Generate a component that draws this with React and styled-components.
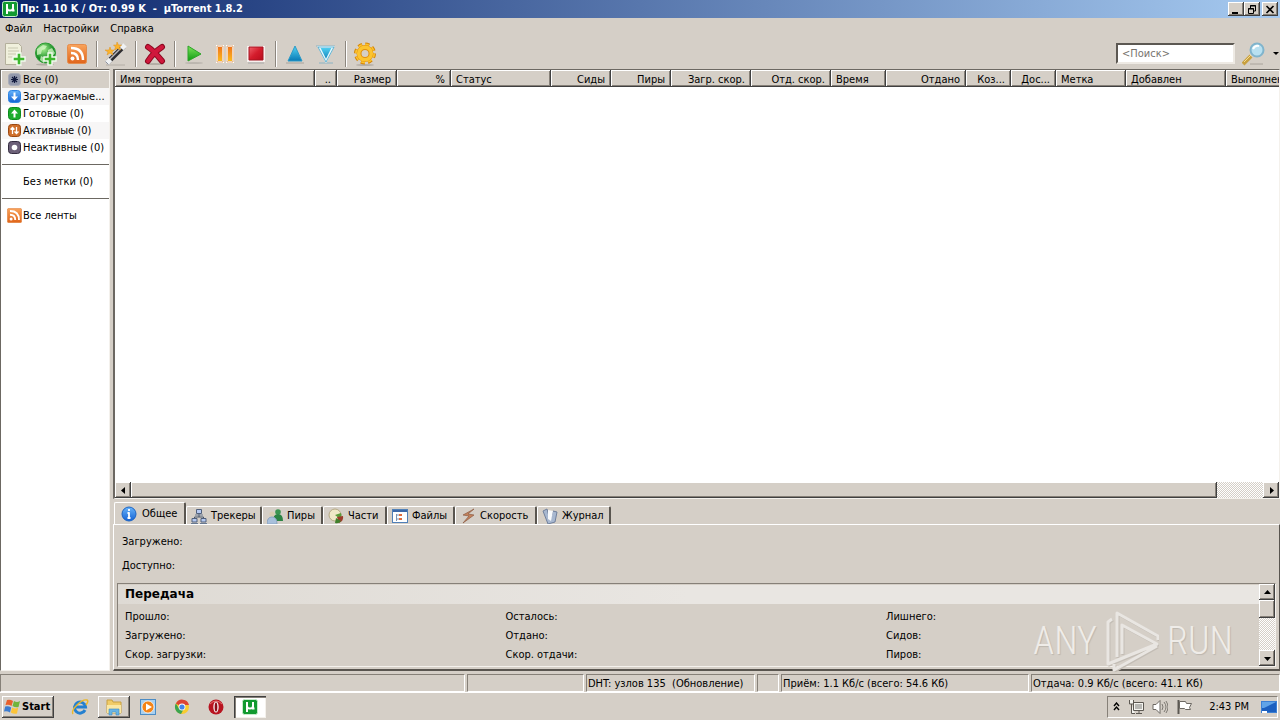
import React from "react";
import styled, { createGlobalStyle, css } from "styled-components";

const Global = createGlobalStyle`
  * { box-sizing: border-box; }
  body { margin: 0; background: #d5cfc7; }
  body, button, input { font-family: Tahoma, "DejaVu Sans Condensed", "DejaVu Sans", sans-serif; font-size: 11px; color: #000; }
  button { padding: 0; border: 0; background: none; }
  svg { display: block; flex: none; }
`;

const face = "#d5cfc7";
const raised = css`
  background: ${face};
  box-shadow: inset -1px -1px #404040, inset 1px 1px #fff, inset -2px -2px #868078;
`;
const checker = css`
  background: repeating-conic-gradient(#fff 0 25%, ${face} 0 50%) 0 0 / 2px 2px;
`;

const Shell = styled.div`
  display: flex;
  flex-direction: column;
  height: 100vh;
  overflow: hidden;
  background: ${face};
`;
const TitleBar = styled.header`
  display: flex;
  align-items: center;
  height: 18px;
  padding: 0 2px;
  gap: 2px;
  background: linear-gradient(90deg, #0a246a, #a6caf0);
`;
const Title = styled.h1`
  flex: 1;
  margin: 0;
  font-size: 11px;
  line-height: 20px;
  font-weight: bold;
  color: #fff;
  white-space: pre;
`;
const WindowButton = styled.button`
  width: 16px;
  height: 14px;
  display: grid;
  place-items: center;
  margin-left: ${(p) => (p.$apart ? 0 : -2)}px;
  ${raised}
`;
const MenuBar = styled.nav`
  display: flex;
  height: 20px;
  padding: 0 5px;
  gap: 11px;
`;
const MenuItem = styled.button`
  line-height: 22px;
`;
const Toolbar = styled.div`
  display: flex;
  align-items: center;
  gap: 7px;
  height: 31px;
  padding: 0 0 0 3px;
`;
const Tool = styled.button`
  width: 24px;
  height: 24px;
`;
const Separator = styled.i`
  width: 1px;
  height: 26px;
  background: #8c867e;
  box-shadow: 1px 0 #fff;
`;
const Search = styled.input`
  width: 119px;
  height: 21px;
  margin-left: auto;
  padding: 0 4px;
  border: 2px solid;
  border-color: #5c5852 #eeeae4 #eeeae4 #5c5852;
  background: #fff;
  outline: 0;
  &::placeholder { color: #77736e; opacity: 1; }
`;
const SearchMenu = styled.button`
  width: 7px;
  height: 20px;
`;
const Main = styled.div`
  flex: 1;
  display: flex;
  gap: 3px;
  min-height: 0;
`;
const Sidebar = styled.aside`
  width: 110px;
  padding: 1px 0 0 1px;
  border: 1px solid;
  border-color: #6c6862 #f4f1ec #f4f1ec #6c6862;
  background: #fff;
`;
const Category = styled.button`
  display: flex;
  align-items: center;
  gap: 1px;
  width: 100%;
  height: 17px;
  padding-left: 5px;
  white-space: nowrap;
  text-align: left;
  background: ${(p) => (p.$selected ? face : p.$tint ? "#f7f6f6" : "transparent")};
`;
const IconSlot = styled.span`
  width: 15px;
  height: 15px;
`;
const Rule = styled.hr`
  height: 1px;
  margin: 8px 0;
  border: 0;
  background: #6c6862;
`;
const Content = styled.main`
  flex: 1;
  display: flex;
  flex-direction: column;
  min-width: 0;
`;
const ListBox = styled.section`
  flex: 1;
  display: flex;
  flex-direction: column;
  overflow: hidden;
  min-height: 0;
  border: 1px solid;
  border-left-width: 2px;
  border-color: #6c6862 #f4f1ec #f4f1ec #6c6862;
  background: #fff;
`;
const ListArea = styled.div`
  flex: 1;
  overflow: hidden;
`;
const Table = styled.table`
  table-layout: fixed;
  width: 1211px;
  border-collapse: collapse;
`;
const Th = styled.th`
  width: ${(p) => p.$w}px;
  height: 17px;
  padding: 1px 6px 0 5px;
  font-weight: normal;
  line-height: 15px;
  white-space: nowrap;
  overflow: hidden;
  text-align: ${(p) => (p.$right ? "right" : "left")};
  ${raised}
`;
const ScrollBar = styled.div`
  display: flex;
  flex-direction: ${(p) => (p.$vertical ? "column" : "row")};
  flex: none;
  ${(p) => (p.$vertical ? "width: 16px;" : "height: 16px;")}
  ${checker}
`;
const ScrollButton = styled.button`
  width: 16px;
  height: 16px;
  display: grid;
  place-items: center;
  flex: none;
  ${raised}
`;
const Thumb = styled.div`
  flex: 0 0 ${(p) => p.$size};
  ${raised}
`;
const Gap = styled.div`
  flex: 1;
`;
const Tabs = styled.div`
  display: flex;
  align-items: flex-end;
  height: 25px;
  padding-left: 1px;
`;
const Tab = styled.button`
  display: flex;
  align-items: center;
  gap: ${(p) => (p.$active ? 5 : 4)}px;
  width: ${(p) => p.$w}px;
  height: ${(p) => (p.$active ? 22 : 18)}px;
  padding: 0 0 0 ${(p) => (p.$active ? 6 : 4)}px;
  white-space: nowrap;
  border-top: 1px solid #fff;
  border-left: 1px solid #fff;
  border-right: 2px solid #59554f;
  border-radius: 2px 2px 0 0;
  background: ${face};
`;
const Panel = styled.section`
  height: 147px;
  display: flex;
  flex-direction: column;
  padding: 5px 3px 2px;
  border-top: 1px solid #fff;
  border-left: 1px solid #fff;
  border-right: 1px solid #59554f;
  border-bottom: 2px solid #59554f;
`;
const Line = styled.div`
  height: 24px;
  padding: 0 5px;
  line-height: 24px;
`;
const Details = styled.div`
  display: flex;
  flex: 1;
  min-height: 0;
  margin-top: 5px;
  border: 1px solid;
  border-color: #868078 #f4f1ec #f4f1ec #868078;
`;
const DetailBody = styled.div`
  flex: 1;
  position: relative;
  padding-top: 1px;
`;
const Heading = styled.h2`
  margin: 0 0 3px;
  padding: 0 7px;
  font-family: Verdana, "DejaVu Sans", sans-serif;
  font-size: 12px;
  line-height: 19px;
  background: linear-gradient(90deg, #dedad4, #e9e6e2 50%, #e9e6e2);
`;
const Facts = styled.div`
  display: grid;
  grid-template-columns: 1fr 1fr 373px;
  padding-left: 7px;
  line-height: 19px;
`;
const Watermark = styled.div`
  position: absolute;
  right: 26px;
  top: 26px;
  display: flex;
  align-items: center;
  gap: 8px;
  font-family: "Roboto Condensed", "Liberation Sans Narrow", sans-serif;
  font-weight: 300;
  font-size: 38px;
  color: #efece8;
  line-height: 62px;
  text-shadow: 1px 1px 1px #bdb7af;
`;
const StatusBar = styled.footer`
  display: flex;
  gap: 2px;
  height: 22px;
  padding-top: 3px;
  border-bottom: 1px solid #fff;
`;
const Status = styled.div`
  flex: ${(p) => (p.$w ? `0 0 ${p.$w}px` : "1")};
  padding-left: 1px;
  line-height: 18px;
  white-space: pre;
  border: 1px solid;
  border-color: #868078 #fff #fff #868078;
`;
const TaskBar = styled.div`
  display: flex;
  align-items: center;
  height: 27px;
  padding: 0 2px;
`;
const Start = styled.button`
  display: flex;
  align-items: center;
  gap: 1px;
  width: 52px;
  height: 22px;
  padding-left: 2px;
  margin-right: 10px;
  font-weight: bold;
  ${raised}
`;
const Task = styled.button`
  width: 32px;
  height: 22px;
  margin-right: 2px;
  display: grid;
  place-items: center;
  ${(p) => p.$open && raised}
  ${(p) =>
    p.$pressed &&
    css`
      background: #fff;
      box-shadow: inset 1px 1px #404040, inset 2px 2px #868078, inset -1px -1px #f4f1ec;
    `}
`;
const Tray = styled.div`
  display: flex;
  align-items: center;
  gap: 8px;
  height: 22px;
  margin-left: auto;
  padding: 0 0 0 5px;
  border: 1px solid;
  border-color: #868078 #fff #fff #868078;
`;
const Clock = styled.time`
  margin: 0 4px 0 9px;
  white-space: nowrap;
`;

const Svg = ({ s = 24, w, h, children, ...rest }) => (
  <svg width={w || s} height={h || s} viewBox={`0 0 ${w || s} ${h || s}`} aria-hidden="true" {...rest}>
    {children}
  </svg>
);

const Defs = () => (
  <svg width="0" height="0" aria-hidden="true">
    <defs>
      <linearGradient id="green" x2="0" y2="1"><stop stopColor="#7ee45a" /><stop offset="1" stopColor="#0c9a12" /></linearGradient>
      <linearGradient id="orange" x2="0" y2="1"><stop stopColor="#f9a45c" /><stop offset="1" stopColor="#e0641a" /></linearGradient>
      <linearGradient id="amber" x2="0" y2="1"><stop stopColor="#f0701c" /><stop offset="1" stopColor="#fcc01c" /></linearGradient>
      <linearGradient id="red" x2="1" y2="1"><stop stopColor="#f0606a" /><stop offset=".5" stopColor="#d41c2c" /><stop offset="1" stopColor="#b80c1c" /></linearGradient>
      <linearGradient id="cyan" x2="0" y2="1"><stop stopColor="#54d4f4" /><stop offset="1" stopColor="#0878b4" /></linearGradient>
      <linearGradient id="blue" x2="0" y2="1"><stop stopColor="#68b4fa" /><stop offset="1" stopColor="#1462d4" /></linearGradient>
      <radialGradient id="globe" cx=".4" cy=".3"><stop stopColor="#a8f090" /><stop offset="1" stopColor="#168c24" /></radialGradient>
    </defs>
  </svg>
);

const Plus = () => (
  <path d="M14 11h4v4h4v4h-4v4h-4v-4h-4v-4h4z" fill="#3cb82c" stroke="#f4fcf0" strokeWidth="1.400" />
);
const MuMark = ({ s = 16 }) => (
  <svg width={s} height={s} viewBox="0 0 16 16" aria-hidden="true">
    <rect x=".5" y=".5" width="15" height="15" rx="2" fill="#129a30" stroke="#c8eccc" />
    <path d="M5 3v10M5 4v3q0 2.500 3 2.500t3-2.500V3v6.500h1.500" fill="none" stroke="#fff" strokeWidth="2" />
  </svg>
);
const Rss = ({ s }) => (
  <svg width={s} height={s} viewBox="0 0 20 20" aria-hidden="true">
    <rect x=".5" y=".5" width="19" height="19" rx="2" fill="url(#orange)" stroke="#e48c4c" />
    <circle cx="5.500" cy="14.500" r="2" fill="#fff" />
    <path d="M4 9q7 0 7 7M4 4q12 0 12 12" fill="none" stroke="#fff" strokeWidth="2.500" />
  </svg>
);

const ToolIcons = {
  add: <Svg><path d="M2.500 1.500h13l3 3v18h-16z" fill="#f0f0dc" stroke="#b4b09c" /><path d="M5 6h10M5 9h11M5 12h8M5 15h5" stroke="#c8c8b0" /><Plus /></Svg>,
  url: <Svg><ellipse cx="11" cy="22.500" rx="9" ry="1" fill="#b4aea6" /><circle cx="11.500" cy="11" r="10" fill="url(#globe)" stroke="#2c9c34" /><path d="M3 7l6-4 4 1-2 3-3 1-1 4-4 1zM14 8l4-2 3 5-3 4-4-2zM7 14l4 2-1 5-4-3z" fill="#d8f8c8" opacity=".75" /><Plus /></Svg>,
  rss: <Svg><g transform="translate(2 2)"><Rss s={20} /></g></Svg>,
  create: <Svg><path d="M2 23h19" stroke="#b4aea6" /><path d="M4 20L20 4" stroke="#2c2c30" strokeWidth="5" /><path d="M5 18L18 5" stroke="#b8b8bc" strokeWidth="1.500" /><path d="M3 21l3.500-3.500M17.500 6.500L21 3" stroke="#f0f2f4" strokeWidth="5" /><path d="M1.500 19.500L4.500 22.500" stroke="#8890a0" /><path d="M6 5l1 3h3l-2 2 1 3-3-2-3 2 1-3-3-2h4zM13 0l1.500 3h3l-2 2 1 3-3-1.500-3 1.500 1-3-2-2h3z" fill="#fcb42c" stroke="#e09018" strokeWidth=".5" /></Svg>,
  remove: <Svg><ellipse cx="12" cy="22" rx="9" ry="1" fill="#b4aea6" /><path d="M5 5Q10 8 19 19M19 5Q10 11 5 19" stroke="#8c0820" strokeWidth="6" strokeLinecap="round" fill="none" /><path d="M5 5Q10 8 19 19M19 5Q10 11 5 19" stroke="#d0183c" strokeWidth="4" strokeLinecap="round" fill="none" /></Svg>,
  start: <Svg><ellipse cx="12" cy="21" rx="9" ry="1" fill="#bbb6af" /><path d="M6 4l13 8-13 7z" fill="url(#green)" stroke="#2ca428" /></Svg>,
  pause: <Svg><path d="M4 4h6v16H4zM14 4h6v16h-6z" fill="url(#amber)" stroke="#fff" strokeWidth="2" /><path d="M4 4h6v16H4zM14 4h6v16h-6z" fill="none" stroke="#d4843c" strokeWidth=".7" /></Svg>,
  stop: <Svg><path d="M3 4h18v16H3z" fill="#f8f0ee" /><path d="M5 5h14v13H5z" fill="url(#red)" stroke="#a41420" /><path d="M4 21h16" stroke="#aaa" /></Svg>,
  up: <Svg><path d="M3 21h18" stroke="#aaa49c" /><path d="M12 4l7 15H5z" fill="url(#cyan)" stroke="#2c9cc8" /></Svg>,
  down: <Svg><path d="M2 4h19M5 21h14" stroke="#8cb4c4" /><path d="M5 5h14l-7 14z" fill="url(#cyan)" stroke="#e8f8fc" strokeWidth="2" /><path d="M4 5h16l-8 15z" fill="none" stroke="#2c9cc8" strokeWidth=".7" /></Svg>,
  prefs: <Svg><ellipse cx="12" cy="23" rx="9" ry="1" fill="#b4aea6" /><circle cx="12" cy="11.500" r="9" fill="none" stroke="#d48408" strokeWidth="4" strokeDasharray="4 3.070" /><circle cx="12" cy="11.500" r="8.500" fill="none" stroke="#fcc42c" strokeWidth="3" strokeDasharray="3.500 3.175" /><circle cx="12" cy="11.500" r="6" fill="none" stroke="#e09010" strokeWidth="5" /><circle cx="12" cy="11.500" r="6.300" fill="none" stroke="#fcc430" strokeWidth="3.500" /></Svg>,
};

const tools = [
  ["add", "Добавить торрент"], ["url", "Добавить по URL"], ["rss", "Добавить RSS"], null,
  ["create", "Создать"], null, ["remove", "Удалить"], null,
  ["start", "Запустить"], ["pause", "Пауза"], ["stop", "Остановить"], null,
  ["up", "Выше"], ["down", "Ниже"], null, ["prefs", "Настройки"],
];

const Badge = ({ fill, stroke, children }) => (
  <Svg s={15}><rect x="1.500" y="1.500" width="12" height="12" rx="3" fill={fill} stroke={stroke} />{children}</Svg>
);
const categories = [
  ["Все (0)", <Badge fill="#9298ac" stroke="#a8acb8"><path d="M7.500 4v7M4 7.500h7M5 5l5 5M10 5l-5 5" stroke="#10183c" strokeWidth="1.200" /></Badge>],
  ["Загружаемые...", <Badge fill="url(#blue)" stroke="#2c84e4"><path d="M6.500 3.500h2v4h2.500l-3.500 4-3.500-4h2.500z" fill="#fff" /></Badge>],
  ["Готовые (0)", <Badge fill="#1cac2c" stroke="#0c8c1c"><path d="M6.500 11.500h2v-4h2.500l-3.500-4-3.500 4h2.500z" fill="#fff" /></Badge>],
  ["Активные (0)", <Badge fill="#d0702c" stroke="#9c4810"><path d="M5.500 11V4.500M3.500 6.500l2-2 2 2M9.500 4v6.500M7.500 8.500l2 2 2-2" stroke="#fff" strokeWidth="1.300" fill="none" /></Badge>],
  ["Неактивные (0)", <Badge fill="#6c6078" stroke="#342c40"><circle cx="7.500" cy="7.500" r="2.800" fill="#fff" /></Badge>],
];

const columns = [
  ["Имя торрента", 200], ["..", 22, 1], ["Размер", 60, 1], ["%", 54, 1], ["Статус", 100], ["Сиды", 60, 1],
  ["Пиры", 60, 1], ["Загр. скор.", 80, 1], ["Отд. скор.", 80, 1], ["Время", 55], ["Отдано", 80, 1],
  ["Коз...", 45, 1], ["Дос...", 45, 1], ["Метка", 70], ["Добавлен", 100], ["Выполнен", 100],
];

const tabs = [
  ["Общее", 72, <Svg s={16}><circle cx="8" cy="8" r="7" fill="url(#blue)" stroke="#1c64c4" /><path d="M8 3v2M8 6.500v5.500M6.500 12h3M6.500 7h2" stroke="#fff" strokeWidth="1.800" /></Svg>],
  ["Трекеры", 76, <Svg s={16}><path d="M8 6v3M3.500 11V9h9v2" fill="none" stroke="#44546c" /><path d="M5.500 1.500h5v4h-5zM1 10.500h5V14H1zM10 10.500h5V14h-5z" fill="#b4c8f0" stroke="#50607c" /><path d="M4 7h8M0 15.500h7M9 15.500h7" stroke="#687890" /></Svg>],
  ["Пиры", 61, <Svg s={16}><circle cx="11" cy="4" r="2.800" fill="#3c9450" /><path d="M6 13q0-7 5-7t5 7z" fill="#2c8444" /><circle cx="5" cy="6" r="2.600" fill="#d8ccb0" /><path d="M0 16q0-7 5-7t5 7z" fill="#a8c0dc" stroke="#8ca4c0" /></Svg>],
  ["Части", 64, <Svg s={16}><circle cx="7" cy="7" r="6" fill="#f0e8c8" stroke="#b4a884" /><path d="M7 7l6-2a6 6 0 0 1-1 6z" fill="#5c9c3c" /><path d="M9 9l6-1q1 5-4 7z" fill="#9c3c2c" /><path d="M8 10l-1 5q4 1 6-2z" fill="#40802c" /></Svg>],
  ["Файлы", 68, <Svg s={16}><rect x=".5" y="1.500" width="15" height="13" fill="#fff" stroke="#5080b8" /><path d="M1 2h14v2H1z" fill="#3c68a8" /><path d="M4.500 6v7M4 7h3M4 11h3" stroke="#7c94b4" /><path d="M7 6h3v2H7zM7 10h3v2H7z" fill="#e06c3c" /></Svg>],
  ["Скорость", 82, <Svg s={16}><path d="M14 1L3 7l6 1-6 7 11-8-6-1z" fill="#c4825c" stroke="#8c5c44" strokeWidth=".7" /></Svg>],
  ["Журнал", 74, <Svg s={16}><path d="M1 3l4-2 3 11 3-9 4 1-2 10-7 2z" fill="#a8b8d0" stroke="#70809c" /><path d="M6 2l5 1-2 10-3-2z" fill="#f8fafc" /></Svg>],
];

const arrows = { left: "M5 0v7L1 3.500z", right: "M2 0v7l4-3.500z", up: "M0 5h7L3.500 1z", down: "M0 2h7L3.500 6z" };
const Arrow = ({ dir }) => <Svg s={7}><path d={arrows[dir]} /></Svg>;

const WinLogo = () => (
  <Svg s={17}><path d="M3 2q3-1 6 1L7.500 8Q5 6 1.500 7z" fill="#e8602c" /><path d="M10 3q3 2 6 0l-1.500 6q-3 1-6-1z" fill="#70b43c" /><path d="M1.200 8.500q3-1 6 1L6 14.500q-3-2-6-1z" fill="#3c7cd0" /><path d="M8.200 9.500q3 2 6 0L13 15.500q-3 1-6.200-1z" fill="#fcc438" /></Svg>
);
const IE = () => (
  <Svg s={18}><path d="M14 12a5.500 5.500 0 1 1 .5-3H5" fill="none" stroke="#2480d0" strokeWidth="3" /><path d="M2 16q-2-3 4-9t10-5q2 1-1 5" fill="none" stroke="#ecb828" strokeWidth="1.400" /></Svg>
);
const Folder = () => (
  <Svg s={18}><path d="M2 2h5l1 2h8v11H2z" fill="#f0cc68" stroke="#c8a040" /><path d="M2 7h14v8H2z" fill="#fae8a4" /><path d="M4 17v-6h10v6h-3v-3H7v3z" fill="#68b4e4" stroke="#3c8cc4" strokeWidth=".6" /></Svg>
);
const Media = () => (
  <Svg s={16}><rect x=".5" y=".5" width="15" height="15" fill="#a8d0f0" stroke="#4c8cc4" /><circle cx="8" cy="8" r="6" fill="#f48418" stroke="#fff" strokeWidth=".7" /><path d="M6 4.500l6 3.500-6 3.500z" fill="#fff" /></Svg>
);
const Chrome = () => (
  <Svg s={16}><circle cx="8" cy="8" r="7" fill="#f8cc30" /><path d="M8 8L1.900 4.500A7 7 0 0 1 15 6H8z" fill="#dc4434" /><path d="M1.900 4.500A7 7 0 0 0 7 15l3-5.500-5 0z" fill="#3ca450" /><circle cx="8" cy="8" r="3.400" fill="#fff" /><circle cx="8" cy="8" r="2.600" fill="#4484e8" /></Svg>
);
const Opera = () => (
  <Svg s={16}><circle cx="8" cy="8" r="7.500" fill="#b81420" /><path d="M2 5q6-6 12 0" fill="none" stroke="#e87070" /><ellipse cx="8" cy="8" rx="2.700" ry="5.500" fill="#f4e8e8" /><ellipse cx="8" cy="8" rx="1.300" ry="4.500" fill="#8c0c18" /></Svg>
);

export default function App() {
  return (
    <Shell>
      <Global />
      <Defs />
      <TitleBar>
        <MuMark />
        <Title>Пр: 1.10 K / От: 0.99 K  -  µTorrent 1.8.2</Title>
        <WindowButton aria-label="Свернуть"><Svg w={10} h={9}><path d="M1 7h6v2H1z" /></Svg></WindowButton>
        <WindowButton aria-label="Восстановить"><Svg w={10} h={9}><path d="M3.500 3V.500h5V6H7M3 1h6M1.500 3.500h5v5h-5zM1 4h6" fill="none" stroke="#000" /></Svg></WindowButton>
        <WindowButton $apart aria-label="Закрыть"><Svg w={10} h={9}><path d="M1.500 1l7 7M8.500 1l-7 7" stroke="#000" strokeWidth="1.600" /></Svg></WindowButton>
      </TitleBar>
      <MenuBar>
        {["Файл", "Настройки", "Справка"].map((m) => <MenuItem key={m}>{m}</MenuItem>)}
      </MenuBar>
      <Toolbar>
        {tools.map((t, i) => t ? <Tool key={i} aria-label={t[1]}>{ToolIcons[t[0]]}</Tool> : <Separator key={i} />)}
        <Search aria-label="Поиск" placeholder="<Поиск>" />
        <Tool aria-label="Найти">
          <Svg><path d="M8 22h13" stroke="#aaa49c" /><path d="M1 22l8-8" stroke="#c8a040" strokeWidth="4" /><path d="M2 20l7-7" stroke="#f4dc90" strokeWidth="1" /><circle cx="15" cy="8" r="6.500" fill="#b8e0f0" stroke="#80b4cc" strokeWidth="2" /><path d="M11 7q2-4 6-3" stroke="#fff" strokeWidth="2" fill="none" /></Svg>
        </Tool>
        <SearchMenu aria-label="Выбор поиска"><Svg w={7} h={4}><path d="M0 0h6L3 3z" /></Svg></SearchMenu>
      </Toolbar>
      <Main>
        <Sidebar>
          {categories.map(([name, icon], i) => (
            <Category key={name} $selected={i === 0} $tint={i % 2 === 1}>{icon}{name}</Category>
          ))}
          <Rule />
          <Category><IconSlot />Без метки (0)</Category>
          <Rule />
          <Category><Rss s={15} />Все ленты</Category>
        </Sidebar>
        <Content>
          <ListBox>
            <ListArea>
              <Table>
                <thead><tr>{columns.map(([name, w, right]) => <Th key={name} $w={w} $right={right}>{name}</Th>)}</tr></thead>
              </Table>
            </ListArea>
            <ScrollBar>
              <ScrollButton aria-label="Влево"><Arrow dir="left" /></ScrollButton>
              <Thumb $size="calc(96% - 31px)" />
              <Gap />
              <ScrollButton aria-label="Вправо"><Arrow dir="right" /></ScrollButton>
            </ScrollBar>
          </ListBox>
          <Tabs role="tablist">
            {tabs.map(([name, w, icon], i) => <Tab key={name} role="tab" aria-selected={i === 0} $active={i === 0} $w={w}>{icon}{name}</Tab>)}
          </Tabs>
          <Panel>
            <Line>Загружено:</Line>
            <Line>Доступно:</Line>
            <Details>
              <DetailBody>
                <Heading>Передача</Heading>
                <Facts>
                  {["Прошло:", "Осталось:", "Лишнего:", "Загружено:", "Отдано:", "Сидов:", "Скор. загрузки:", "Скор. отдачи:", "Пиров:"].map((f) => <span key={f}>{f}</span>)}
                </Facts>
                <Watermark>
                  <span>ANY</span>
                  <Svg w={54} h={62}>
                    <g fill="none" strokeWidth="3" strokeLinejoin="round">
                      <path id="play" d="M7 9l-4 3v42l49-20L17 15v29M12 47V3l41 23v4M9 54v6l43-24" transform="translate(1 1)" stroke="#c3bdb5" />
                      <path d="M7 9l-4 3v42l49-20L17 15v29M12 47V3l41 23v4M9 54v6l43-24" stroke="#e9e6e2" />
                    </g>
                  </Svg>
                  <span>RUN</span>
                </Watermark>
              </DetailBody>
              <ScrollBar $vertical>
                <ScrollButton aria-label="Вверх"><Arrow dir="up" /></ScrollButton>
                <Thumb $size="18px" />
                <Gap />
                <ScrollButton aria-label="Вниз"><Arrow dir="down" /></ScrollButton>
              </ScrollBar>
            </Details>
          </Panel>
        </Content>
      </Main>
      <StatusBar>
        <Status $w={465} />
        <Status $w={117} />
        <Status $w={169}>DHT: узлов 135  (Обновление)</Status>
        <Status $w={22} />
        <Status $w={248}>Приём: 1.1 Кб/с (всего: 54.6 Кб)</Status>
        <Status>Отдача: 0.9 Кб/с (всего: 41.1 Кб)</Status>
      </StatusBar>
      <TaskBar>
        <Start><WinLogo />Start</Start>
        <Task aria-label="Internet Explorer"><IE /></Task>
        <Task $open aria-label="Explorer"><Folder /></Task>
        <Task aria-label="Media Player"><Media /></Task>
        <Task aria-label="Chrome"><Chrome /></Task>
        <Task aria-label="Opera"><Opera /></Task>
        <Task $pressed aria-label="µTorrent"><MuMark /></Task>
        <Tray>
          <Svg w={7} h={9}><path d="M1 4l2.500-3L6 4M1 8l2.500-3L6 8" fill="none" stroke="#000" strokeWidth="1.400" /></Svg>
          <Svg s={16}><path d="M5.500 3.500h10v8h-10zM8 14.500h6M11 12v3M1.500 1v4h4V1M3.500 5v9.500H7" fill="#f4f4f0" stroke="#5c5852" /><path d="M7 5h7v5H7z" fill="#b8b8b4" /></Svg>
          <Svg s={16}><path d="M1 5.500h3l4-4v13l-4-4H1z" fill="#fff" stroke="#6c6862" /><path d="M10 5q2 3 0 6M12 3q4 5 0 10M14 2q4 6 0 12" fill="none" stroke="#7c7872" /></Svg>
          <Svg s={16}><path d="M2.500 1v14" stroke="#5c5852" strokeWidth="2" /><path d="M3.500 2.500h6l1 2h5l-2 4 1 2h-5l-1-1h-5z" fill="#fff" stroke="#6c6862" /></Svg>
          <Clock>2:43 PM</Clock>
          <Svg w={16} h={14}><rect x=".5" y="1.500" width="15" height="11" fill="#1c60c0" stroke="#3c80d4" /><path d="M1 2h14L3 8H1z" fill="#60a4e8" /><path d="M1 12h5" stroke="#fff" strokeWidth="2" /></Svg>
        </Tray>
      </TaskBar>
    </Shell>
  );
}
